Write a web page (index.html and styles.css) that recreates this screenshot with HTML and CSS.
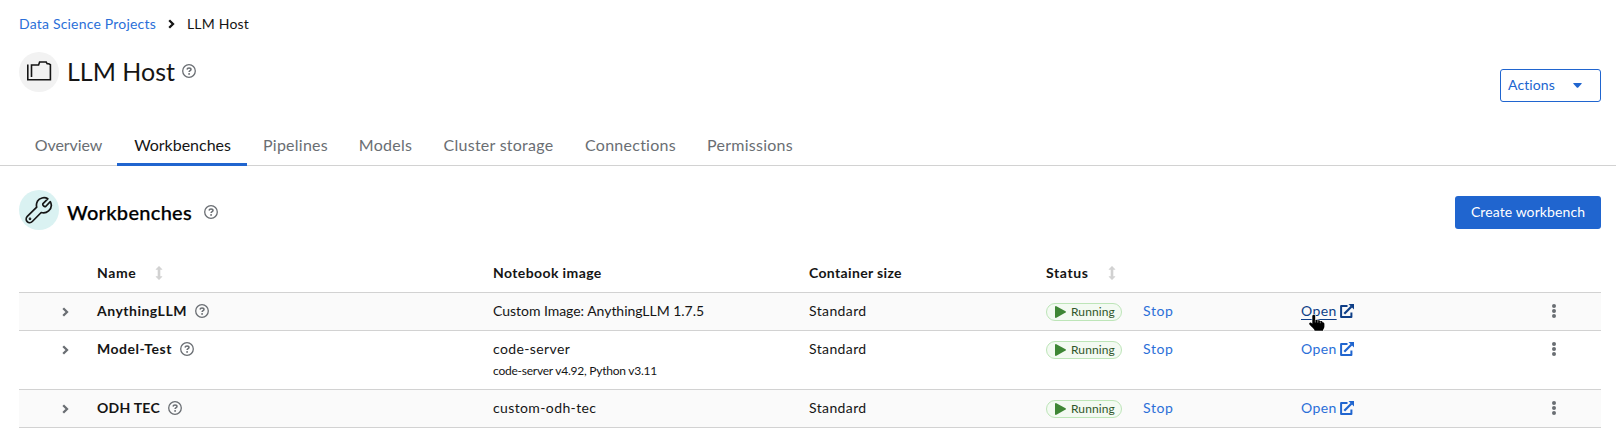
FILE: index.html
```html
<!DOCTYPE html>
<html lang="en">
<head>
<meta charset="utf-8">
<title>LLM Host</title>
<link rel="stylesheet" href="styles.css">
</head>
<body>
<svg class="defs" width="0" height="0" aria-hidden="true">
  <symbol id="help" viewBox="0 0 14 14"><circle cx="7" cy="7" r="6.3" fill="none" stroke="currentColor" stroke-width="1.3"/><path d="M5 5.500C5.200 4.400 6 3.900 7 3.900c1.100 0 2 .6 2 1.600C9 6.800 7.100 6.700 7.100 8.100" fill="none" stroke="currentColor" stroke-width="1.500"/><circle cx="7.100" cy="9.900" r=".95" fill="currentColor"/></symbol>
  <symbol id="chevron" viewBox="0 0 7 10"><path d="M1.200 1.200L5 5L1.200 8.800" fill="none" stroke="currentColor" stroke-width="2.300"/></symbol>
  <symbol id="sort" viewBox="0 0 8 14"><path d="M4 .3L7 3.400H5V10.600H7L4 13.700L1 10.600H3V3.400H1Z" fill="currentColor" stroke="currentColor" stroke-width=".6" stroke-linejoin="round"/></symbol>
  <symbol id="play" viewBox="0 0 11 12"><path d="M.9 0L10.600 5.300Q11.200 6 10.600 6.600L.9 12Q0 12 0 11V1Q0 0 .9 0Z" fill="currentColor"/></symbol>
  <symbol id="external" viewBox="0 0 14 14"><path d="M7.500 2.100H1.100V12.900H11.400V8.500" fill="none" stroke="currentColor" stroke-width="2" stroke-linejoin="round"/><path d="M4.300 9.700L11.500 2.500" fill="none" stroke="currentColor" stroke-width="2.200"/><path d="M8.500 0H14V5.500Z" fill="currentColor"/></symbol>
  <symbol id="kebab" viewBox="0 0 4 14"><circle cx="2" cy="2" r="2"/><circle cx="2" cy="7" r="2"/><circle cx="2" cy="12" r="2"/></symbol>
</svg>

<nav class="breadcrumb">
  <a class="link">Data Science Projects</a>
  <svg class="crumb-sep"><use href="#chevron"/></svg>
  <span>LLM Host</span>
</nav>

<header class="page-header">
  <div class="heading">
    <span class="badge badge-project"><svg width="26" height="22" viewBox="0 0 26 22" fill="none" stroke="#151515" stroke-width="1.600"><path d="M1.800 3.500V18.700H24.400V3.700L22.800 2.800H21.200L20.200 1H13.600L12.600 4H5.500V16"/></svg></span>
    <h1>LLM Host</h1>
    <svg class="help"><use href="#help"/></svg>
  </div>
  <button class="actions">Actions<svg width="9" height="5" viewBox="0 0 9 5"><path d="M.6 0H8.400Q9 .3 8.600 .8L5 4.700Q4.500 5 4 4.700L.4 .8Q0 .3 .6 0Z" fill="currentColor"/></svg></button>
</header>

<nav class="tabs">
  <a class="tab tab-overview">Overview</a>
  <a class="tab tab-workbenches active">Workbenches</a>
  <a class="tab tab-pipelines">Pipelines</a>
  <a class="tab tab-models">Models</a>
  <a class="tab tab-storage">Cluster storage</a>
  <a class="tab tab-connections">Connections</a>
  <a class="tab tab-permissions">Permissions</a>
</nav>

<main>
  <section class="section-header">
    <span class="badge badge-workbench"><svg width="28" height="28" viewBox="0 0 28 28" fill="none" stroke="#151515" stroke-width="1.700" stroke-linejoin="round"><path d="M22.800 2.800C19.300 .6 14.500 1.900 12.400 5.300C11.400 7.200 11.200 9.300 11.700 11.200L2.300 20.400C.9 21.900 .8 24.200 2.200 25.600C3.600 27 5.800 27 7.300 25.500L16.200 16.500C18.500 17.200 21.300 16.900 23.600 14.900C26.500 12.300 26.900 8.700 25.300 5.700L20.700 10.500C19.400 11.200 17.200 9.300 18 7.600Z"/><circle cx="5" cy="22.800" r=".5"/></svg></span>
    <h2>Workbenches</h2>
    <svg class="help"><use href="#help"/></svg>
    <button class="create">Create workbench</button>
  </section>

  <table class="grid">
    <colgroup><col class="c-toggle"><col class="c-name"><col class="c-image"><col class="c-size"><col class="c-status"><col class="c-stop"><col class="c-open"><col class="c-menu"></colgroup>
    <thead>
      <tr><th></th><th><div class="th-sort th-name">Name<svg class="sort"><use href="#sort"/></svg></div></th><th>Notebook image</th><th class="th-size">Container size</th><th><div class="th-sort th-status">Status<svg class="sort"><use href="#sort"/></svg></div></th><th></th><th></th><th></th></tr>
    </thead>
    <tbody>
      <tr class="striped">
        <td><svg class="toggle"><use href="#chevron"/></svg></td>
        <td><div class="name">AnythingLLM<svg class="help"><use href="#help"/></svg></div></td>
        <td class="custom-image">Custom Image: AnythingLLM 1.7.5</td>
        <td>Standard</td>
        <td><span class="status"><svg width="11" height="12"><use href="#play"/></svg>Running</span></td>
        <td><a class="link stop">Stop</a></td>
        <td><a class="open hovered"><span>Open</span><svg width="14" height="14"><use href="#external"/></svg><svg class="cursor" width="18" height="18" viewBox="0 0 18 18"><path d="M5.700 .7C6.700 .7 7.200 1.300 7.200 2.200V6.200C7.800 5.300 9.400 5.500 9.700 6.500C10.600 5.900 11.900 6.300 12.200 7.300C13.200 6.800 14.400 7.300 14.600 8.400C15.600 8.200 16.400 9 16.400 10.100V12.600C16.400 14.500 15 15 15 16.700H6.500C6.500 15 4.800 14.200 3.800 13L1.400 10.400C.7 9.300 2 8 3.200 8.800L4.300 9.700V2.200C4.300 1.300 4.800 .7 5.700 .7Z" fill="#000" stroke="#fff" stroke-width="1.200" paint-order="stroke"/><path d="M7.300 6.200V8.500M9.800 6.700V8.700M12.300 7.600V9.200" stroke="#fff" stroke-width=".5"/></svg></a></td>
        <td><svg class="kebab"><use href="#kebab"/></svg></td>
      </tr>
      <tr class="tall">
        <td><svg class="toggle"><use href="#chevron"/></svg></td>
        <td><div class="name">Model-Test<svg class="help"><use href="#help"/></svg></div></td>
        <td>code-server<div class="sub">code-server v4.92, Python v3.11</div></td>
        <td>Standard</td>
        <td><span class="status"><svg width="11" height="12"><use href="#play"/></svg>Running</span></td>
        <td><a class="link stop">Stop</a></td>
        <td><a class="open"><span>Open</span><svg width="14" height="14"><use href="#external"/></svg></a></td>
        <td><svg class="kebab"><use href="#kebab"/></svg></td>
      </tr>
      <tr class="striped">
        <td><svg class="toggle"><use href="#chevron"/></svg></td>
        <td><div class="name name-odh">ODH TEC<svg class="help"><use href="#help"/></svg></div></td>
        <td>custom-odh-tec</td>
        <td>Standard</td>
        <td><span class="status"><svg width="11" height="12"><use href="#play"/></svg>Running</span></td>
        <td><a class="link stop">Stop</a></td>
        <td><a class="open"><span>Open</span><svg width="14" height="14"><use href="#external"/></svg></a></td>
        <td><svg class="kebab"><use href="#kebab"/></svg></td>
      </tr>
    </tbody>
  </table>
</main>
</body>
</html>
```
FILE: styles.css
```css
* { box-sizing: border-box; }
body { margin: 0; background: #fff; color: #151515; font: 14px/21px Lato, "Open Sans", sans-serif; letter-spacing: .2px; height: 436px; overflow: hidden; }
svg { display: block; flex: none; }
.defs { position: absolute; }
h1, h2 { margin: 0; }
button { font: inherit; letter-spacing: .1px; }
.link { color: #2b6fd8; }

.breadcrumb { display: flex; align-items: center; height: 52px; padding: 0 19px 6px; }
.crumb-sep { width: 7px; height: 10px; margin: 2px 12px 0 12px; }

.page-header { display: flex; justify-content: space-between; height: 74px; padding: 0 15px 0 19px; }
.heading { display: flex; align-items: center; height: 40px; }
.badge { display: flex; align-items: center; justify-content: center; width: 40px; height: 40px; border-radius: 50%; flex: none; }
.badge-project { background: #f2f2f2; }
.badge-workbench { background: #daf2f2; }
h1 { font-size: 25px; font-weight: 400; line-height: 32px; letter-spacing: 0; margin: -2px 0 0 8px; }
.help { width: 14px; height: 14px; color: #6a6e73; }
h1 + .help { margin: -2px 0 0 7px; }
.actions { display: flex; align-items: center; gap: 18px; width: 101px; height: 33px; margin-top: 17px; padding: 0 0 2px 7px; background: #fff; border: 1px solid #2065cf; border-radius: 3px; color: #2065cf; }
.actions svg { margin-top: 1px; }

.tabs { display: flex; height: 40px; padding-left: 19px; border-bottom: 1px solid #d2d2d2; font-size: 16px; color: #6a6e73; letter-spacing: .25px; }
.tab { display: flex; justify-content: center; height: 40px; padding-left: 1px; line-height: 37px; border-bottom: 3px solid transparent; white-space: nowrap; }
.tab.active { color: #151515; border-color: #2065cf; }
.tab-overview { width: 98px; letter-spacing: -.1px; }
.tab-workbenches { width: 130px; letter-spacing: -.02px; }
.tab-pipelines { width: 96px; }
.tab-models { width: 84px; }
.tab-storage { width: 142px; }
.tab-connections { width: 122px; }
.tab-permissions { width: 117px; }

main { padding: 24px 15px 0 19px; }
.section-header { display: flex; align-items: center; height: 40px; }
h2 { font-size: 20px; font-weight: 500; line-height: 26px; letter-spacing: .3px; margin: 3px 0 0 8px; color: #000; -webkit-text-stroke: .25px #000; }
h2 + .help { margin: 4px 0 0 12px; }
.create { width: 146px; height: 33px; margin: 5px 0 0 auto; padding: 0 0 2px; border: 0; border-radius: 3px; background: #2065cf; color: #fff; }

.grid { width: 1582px; border-collapse: separate; border-spacing: 0; table-layout: fixed; margin-top: 24px; }
.c-toggle { width: 78px; }
.c-name { width: 396px; }
.c-image { width: 316px; }
.c-size { width: 237px; }
.c-status { width: 97px; }
.c-stop { width: 158px; }
.c-open { width: 251px; }
.c-menu { width: 49px; }
.grid th, .grid td { padding: 7px 0 0; height: 38px; border-bottom: 1px solid #d2d2d2; text-align: left; vertical-align: top; letter-spacing: .38px; }
.grid th { height: 39px; padding-top: 8px; font-weight: 700; letter-spacing: .4px; white-space: nowrap; }
.grid .tall td { height: 59px; }
.grid .custom-image { letter-spacing: -.03px; }
.grid .th-size { letter-spacing: .35px; }
.striped { background: #fafafa; }
.th-sort { display: flex; align-items: center; justify-content: space-between; }
.th-name { letter-spacing: .6px; width: 66px; }
.th-status { letter-spacing: .6px; width: 70px; }
.sort { width: 8px; height: 14px; color: #d2d2d2; }
.toggle { width: 7px; height: 10px; margin: 7px 0 0 43px; color: #6a6e73; }
.name { display: flex; align-items: center; gap: 8px; font-weight: 700; letter-spacing: .5px; }
.name-odh { letter-spacing: .25px; }
.sub { margin-top: 3px; font-size: 12px; line-height: 18px; letter-spacing: -.24px; }
.status { display: flex; align-items: center; gap: 5px; width: 76px; height: 18px; margin-top: 3px; padding: 0 0 0 8px; border: 1px solid #bde5b8; border-radius: 9px; background: #f3faf2; color: #30562a; font-size: 12px; line-height: 16px; letter-spacing: .1px; }
.status svg { color: #3e8635; }
.stop { letter-spacing: .6px; }
.open { position: relative; display: flex; align-items: center; gap: 3px; width: 60px; color: #2b6fd8; }
.open svg { color: #2065cf; }
.hovered, .hovered svg { color: #0f3f87; }
.hovered span { text-decoration: underline; text-underline-offset: 3px; }
.open .cursor { position: absolute; left: 7px; top: 14px; }
.kebab { width: 4px; height: 14px; margin: 4px 0 0; fill: #6a6e73; }
```
